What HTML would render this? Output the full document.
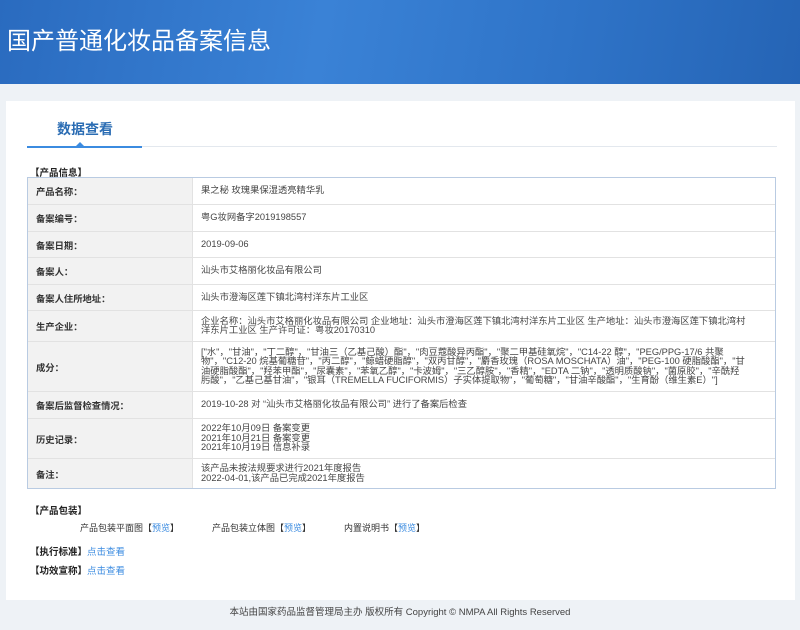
<!DOCTYPE html>
<html><head><meta charset="utf-8"><style>
*{margin:0;padding:0;box-sizing:border-box}
body{width:800px;height:630px;background:#eef2f6;font-family:"Liberation Sans","Noto Sans CJK SC",sans-serif;position:relative;overflow:hidden;color:#333}
.hdr{position:absolute;left:0;top:0;width:800px;height:84px;background:linear-gradient(100deg,#2a6bbf 0%,#3a82d6 40%,#2f74c8 70%,#2564b5 100%)}
.hdr h1{position:absolute;left:7px;top:21px;font-size:24px;font-weight:normal;color:#fff}
.card{position:absolute;left:6px;top:101px;width:789px;height:499px;background:#fff}
.tab{position:absolute;left:57px;top:119px;font-size:14px;font-weight:bold;color:#2a6cb3}
.tl{position:absolute;left:27px;top:146px;width:750px;height:1px;background:#e3e8ee}
.tb{position:absolute;left:27px;top:146px;width:115px;height:2px;background:#3b8be0}
.tri{position:absolute;left:76px;top:142px;width:0;height:0;border-left:4px solid transparent;border-right:4px solid transparent;border-bottom:4px solid #3b8be0}
.sec{position:absolute;font-size:9.5px;font-weight:bold;color:#222}
.tbl{position:absolute;left:27px;top:177px;width:749px;border:1px solid #b9cbe2}
.r{display:flex;border-top:1px solid #e2e2e2;font-size:9.3px}
.r:first-child{border-top:none}
.l{width:165px;background:#f2f2f2;font-weight:bold;color:#333;padding-left:8px;display:flex;align-items:center;border-right:1px solid #e2e2e2}
.v{flex:1;padding:0 28px 0 8px;display:flex;align-items:center;line-height:9.5px;color:#444}
.misc{position:absolute;font-size:9px;color:#333}
a{color:#3b8be0;text-decoration:none}
.ft{position:absolute;left:0;width:800px;top:604px;text-align:center;font-size:9.5px;color:#444}
</style></head><body>
<div class="hdr"><h1>国产普通化妆品备案信息</h1></div>
<div class="card"></div>
<div class="tab">数据查看</div>
<div class="tl"></div><div class="tb"></div><div class="tri"></div>
<div class="sec" style="left:30px;top:165px">【产品信息】</div>
<div class="tbl">
<div class="r" style="height:26px"><div class="l">产品名称：</div><div class="v">果之秘 玫瑰果保湿透亮精华乳</div></div>
<div class="r" style="height:27px"><div class="l">备案编号：</div><div class="v">粤G妆网备字2019198557</div></div>
<div class="r" style="height:26px"><div class="l">备案日期：</div><div class="v">2019-09-06</div></div>
<div class="r" style="height:27px"><div class="l">备案人：</div><div class="v">汕头市艾格丽化妆品有限公司</div></div>
<div class="r" style="height:26px"><div class="l">备案人住所地址：</div><div class="v">汕头市澄海区莲下镇北湾村洋东片工业区</div></div>
<div class="r" style="height:31px"><div class="l">生产企业：</div><div class="v">企业名称：汕头市艾格丽化妆品有限公司 企业地址：汕头市澄海区莲下镇北湾村洋东片工业区 生产地址：汕头市澄海区莲下镇北湾村洋东片工业区 生产许可证：粤妆20170310</div></div>
<div class="r" style="height:50px"><div class="l">成分：</div><div class="v">["水"，"甘油"，"丁二醇"，"甘油三（乙基己酸）酯"，"肉豆蔻酸异丙酯"，"聚二甲基硅氧烷"，"C14-22 醇"，"PEG/PPG-17/6 共聚物"，"C12-20 烷基葡糖苷"，"丙二醇"，"鲸蜡硬脂醇"，"双丙甘醇"，"麝香玫瑰（ROSA MOSCHATA）油"，"PEG-100 硬脂酸酯"，"甘油硬脂酸酯"，"羟苯甲酯"，"尿囊素"，"苯氧乙醇"，"卡波姆"，"三乙醇胺"，"香精"，"EDTA 二钠"，"透明质酸钠"，"菌原胶"，"辛酰羟肟酸"，"乙基己基甘油"，"银耳（TREMELLA FUCIFORMIS）子实体提取物"，"葡萄糖"，"甘油辛酸酯"，"生育酚（维生素E）"]</div></div>
<div class="r" style="height:27px"><div class="l">备案后监督检查情况：</div><div class="v">2019-10-28 对 “汕头市艾格丽化妆品有限公司” 进行了备案后检查</div></div>
<div class="r" style="height:40px"><div class="l">历史记录：</div><div class="v">2022年10月09日 备案变更<br>2021年10月21日 备案变更<br>2021年10月19日 信息补录</div></div>
<div class="r" style="height:30px"><div class="l">备注：</div><div class="v">该产品未按法规要求进行2021年度报告<br>2022-04-01,该产品已完成2021年度报告</div></div>
</div>
<div class="sec" style="left:30px;top:503px">【产品包装】</div>
<div class="misc" style="left:80px;top:521px">产品包装平面图【<a>预览</a>】</div>
<div class="misc" style="left:212px;top:521px">产品包装立体图【<a>预览</a>】</div>
<div class="misc" style="left:344px;top:521px">内置说明书【<a>预览</a>】</div>
<div class="sec" style="left:30px;top:544px">【执行标准】<a style="font-weight:normal">点击查看</a></div>
<div class="sec" style="left:30px;top:563px">【功效宣称】<a style="font-weight:normal">点击查看</a></div>
<div class="ft">本站由国家药品监督管理局主办 版权所有 Copyright © NMPA All Rights Reserved</div>
</body></html>
